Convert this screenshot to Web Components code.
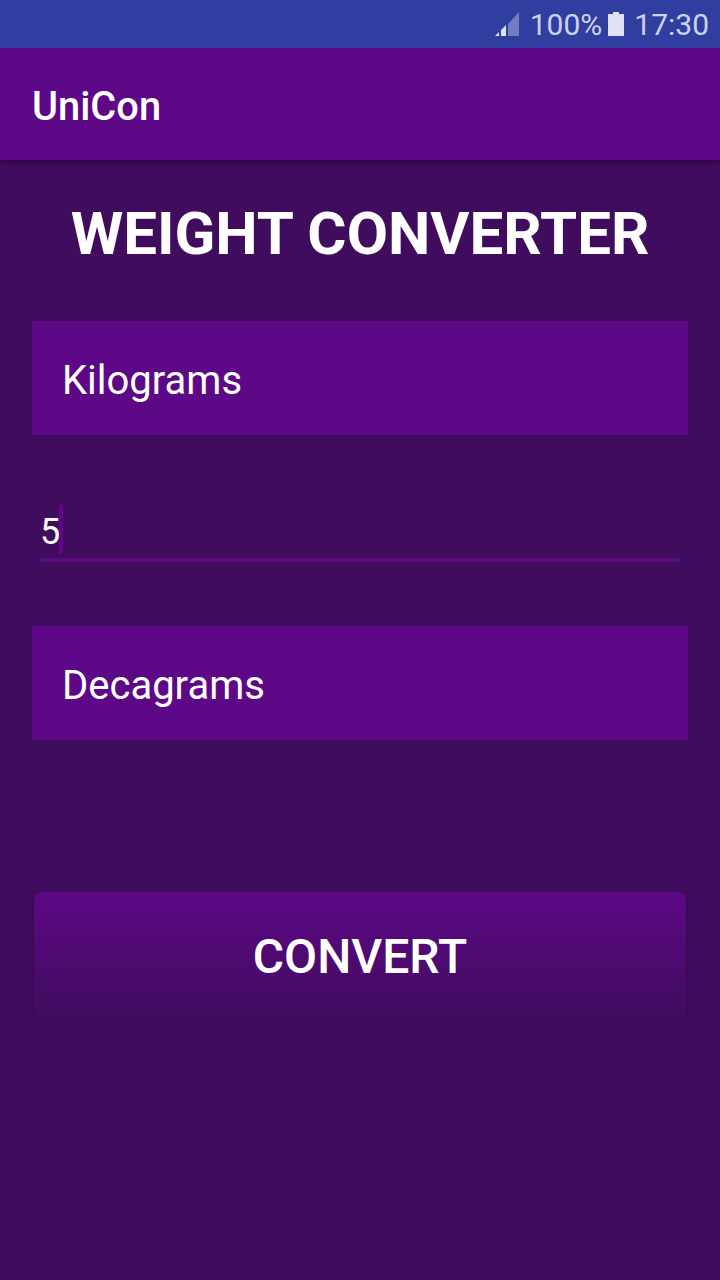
<!DOCTYPE html>
<html lang="en"><head><meta charset="utf-8"><title>UniCon</title>
<style>html,body{margin:0;height:100%;overflow:hidden;background:#400c5e}body{font-family:Roboto,sans-serif;color:#fff}</style>
</head><body><unicon-app></unicon-app>
<script>
const define = (name, html) => customElements.define(name, class extends HTMLElement {
  constructor() {
    super();
    const t = document.createElement('template');
    t.innerHTML = html;
    this.attachShadow({mode: 'open'}).append(t.content.cloneNode(true));
  }
});
define('status-bar', `<style>
:host{display:flex;box-sizing:border-box;height:48px;background:#303f9f;color:#cdd1ec;font-size:30px;line-height:50px;justify-content:flex-end;padding-right:11px}
svg{display:block;flex:none}.signal{margin-right:10px}.battery{margin:0 10px 0 6px}
</style>
<svg class="signal" width="25" height="48"><path d="M0 36L4 32V36Z M6 36V30L11 25V36Z" fill="#dfe1f2"/><path d="M13 36V24L24 12V36Z" fill="#737cbf"/></svg><span>100%</span>
<svg class="battery" width="16" height="48"><path d="M0 14H5V12H11V14H16V36H0Z" fill="#dfe1f2"/></svg><span>17:30</span>`);
define('app-bar', `<style>
:host{display:flex;align-items:center;box-sizing:border-box;height:112px;padding:4px 32px 0;background:#5d0886;font-size:39.8px;font-weight:500;box-shadow:0 2px 6px rgba(0,0,0,.4);clip-path:inset(0 0 -10px)}
</style><slot></slot>`);
define('page-title', `<style>
:host{display:block;height:70px;line-height:72px;font-size:60px;font-weight:700;text-align:center;white-space:nowrap}
</style><slot></slot>`);
define('unit-select', `<style>
:host{display:flex;align-items:center;box-sizing:border-box;height:114px;padding:4px 30px 0;background:#5d0886;font-size:40px}
</style><slot></slot>`);
define('amount-field', `<style>
:host{display:flex;align-items:center;box-sizing:border-box;height:57px;margin:0 8px;border-bottom:4px solid #5d0886;font-size:36px}
i{width:4px;height:49px;margin:0 0 4px -1px;background:#5d0886}
</style><slot></slot><i></i>`);
define('action-button', `<style>
:host{display:flex;align-items:center;justify-content:center;box-sizing:border-box;height:128px;margin:0 2px;border-radius:8px;background:linear-gradient(#5d0886,#400c5e);box-shadow:0 1px 3px rgba(0,0,0,.3);clip-path:inset(-2px -2px 0);font-size:48px;font-weight:500}
</style><slot></slot>`);
define('unicon-app', `<style>
:host{display:flex;flex-direction:column;height:100%;background:#400c5e}
app-bar{z-index:1}
main{display:flex;flex-direction:column;padding:38px 32px 0}
.from{margin-top:53px}amount-field{margin-top:70px}.to{margin-top:64px}action-button{margin-top:152px}
</style><status-bar></status-bar><app-bar>UniCon</app-bar>
<main><page-title>WEIGHT CONVERTER</page-title><unit-select class="from">Kilograms</unit-select><amount-field>5</amount-field><unit-select class="to">Decagrams</unit-select><action-button>CONVERT</action-button></main>`);
</script></body></html>
